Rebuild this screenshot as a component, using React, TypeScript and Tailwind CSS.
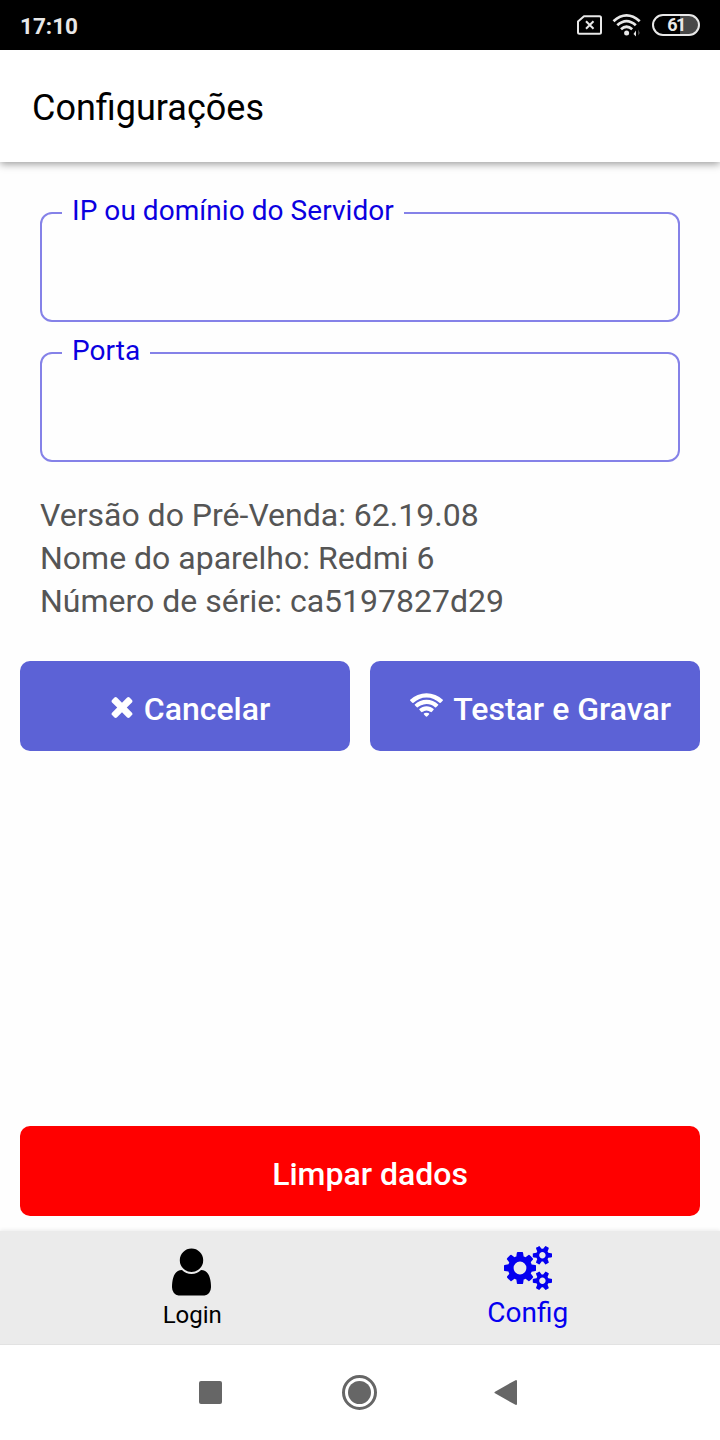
import React from 'react';

interface IconProps {
    path: string;
    viewBox: string;
    className?: string;
}

const TIMES = 'M1490 1322q0 40-28 68l-136 136q-28 28-68 28t-68-28l-294-294-294 294q-28 28-68 28t-68-28l-136-136q-28-28-28-68t28-68l294-294-294-294q-28-28-28-68t28-68l136-136q28-28 68-28t68 28l294 294 294-294q28-28 68-28t68 28l136 136q28 28 28 68t-28 68l-294 294 294 294q28 28 28 68z';
const WIFI = 'M1024 1523q-20 0-93-73.5t-73-93.5q0-32 62.5-54t103.5-22 103.5 22 62.5 54q0 20-73 93.5t-93 73.5zm270-271q-2 0-40-25t-101.5-50-128.5-25-128.5 25-101 50-40.5 25q-18 0-93.5-75t-75.5-93q0-13 10-23 78-77 196-121t233-44 233 44 196 121q10 10 10 23 0 18-75.5 93t-93.5 75zm273-272q-11 0-23-8-136-105-252-154.5t-268-49.5q-85 0-170.5 22t-149 53-113.5 62-79 53-31 22q-17 0-92-75t-75-93q0-12 10-22 132-132 320-205t380-73 380 73 320 205q10 10 10 22 0 18-75 93t-92 75zm271-271q-11 0-22-9-179-157-371.5-236.5t-420.5-79.5-420.5 79.5-371.5 236.5q-11 9-22 9-17 0-92.5-75t-75.5-93q0-13 10-23 187-186 445-288t527-102 527 102 445 288q10 10 10 23 0 18-75.5 93t-92.5 75z';
const USER = 'M1536 1399q0 109-62.5 187t-150.5 78h-854q-88 0-150.5-78t-62.5-187q0-85 8.5-160.5t31.5-152 58.5-131 94-89 134.5-34.5q131 128 313 128t313-128q76 0 134.5 34.5t94 89 58.5 131 31.5 152 8.5 160.5zm-256-887q0 159-112.5 271.5t-271.5 112.5-271.5-112.5-112.5-271.5 112.5-271.5 271.5-112.5 271.5 112.5 112.5 271.5z';
const COGS = 'M896 896q0-106-75-181t-181-75-181 75-75 181 75 181 181 75 181-75 75-181zm768 512q0-52-38-90t-90-38-90 38-38 90q0 53 37.5 90.5t90.5 37.5 90.5-37.5 37.5-90.5zm0-1024q0-52-38-90t-90-38-90 38-38 90q0 53 37.5 90.5t90.5 37.5 90.5-37.5 37.5-90.5zm-384 421v185q0 10-7 19.5t-16 10.5l-155 24q-11 35-32 76 34 48 90 115 7 11 7 20 0 12-7 19-23 30-82.5 89.5t-78.5 59.5q-11 0-21-7l-115-90q-37 19-77 31-11 108-23 155-7 24-30 24h-186q-11 0-20-7.5t-10-17.5l-23-153q-34-10-75-31l-118 89q-7 7-20 7-11 0-21-8-144-133-144-160 0-9 7-19 10-14 41-53t47-61q-23-44-35-82l-152-24q-10-1-17-9.5t-7-19.5v-185q0-10 7-19.5t16-10.5l155-24q11-35 32-76-34-48-90-115-7-11-7-20 0-12 7-20 22-30 82-89t79-59q11 0 21 7l115 90q34-18 77-32 11-108 23-154 7-24 30-24h186q11 0 20 7.5t10 17.5l23 153q34 10 75 31l118-89q8-7 20-7 11 0 21 8 144 133 144 160 0 9-7 19-12 16-42 54t-45 60q23 48 34 82l152 23q10 2 17 10.5t7 19.5zm640 533v140q0 16-149 31-12 27-30 52 51 113 51 138 0 4-4 7-122 71-124 71-8 0-46-47t-52-68q-20 2-30 2t-30-2q-14 21-52 68t-46 47q-2 0-124-71-4-3-4-7 0-25 51-138-18-25-30-52-149-15-149-31v-140q0-16 149-31 13-29 30-52-51-113-51-138 0-4 4-7 4-2 35-20t59-34 30-16q8 0 46 46.5t52 67.5q20-2 30-2t30 2q51-71 92-112l6-2q4 0 124 70 4 3 4 7 0 25-51 138 17 23 30 52 149 15 149 31zm0-1024v140q0 16-149 31-12 27-30 52 51 113 51 138 0 4-4 7-122 71-124 71-8 0-46-47t-52-68q-20 2-30 2t-30-2q-14 21-52 68t-46 47q-2 0-124-71-4-3-4-7 0-25 51-138-18-25-30-52-149-15-149-31v-140q0-16 149-31 13-29 30-52-51-113-51-138 0-4 4-7 4-2 35-20t59-34 30-16q8 0 46 46.5t52 67.5q20-2 30-2t30 2q51-71 92-112l6-2q4 0 124 70 4 3 4 7 0 25-51 138 17 23 30 52 149 15 149 31z';

const Icon: React.FC<IconProps> = ({ path, viewBox, className }) => (
    <svg viewBox={viewBox} className={className} fill="currentColor">
        <path d={path} />
    </svg>
);

const StatusBar: React.FC = () => (
    <div className="flex h-[50px] items-center justify-between bg-black px-5 text-[#e8e8e8]">
        <span className="pt-0.5 text-[22.5px] font-bold leading-none">17:10</span>
        <div className="flex items-center">
            <svg width="26" height="20" viewBox="0 0 26 20" fill="none" stroke="currentColor" strokeWidth="2" className="mr-[9px]">
                <path d="M7 1.2h15.5q1.5 0 1.5 1.5v14.6q0 1.5-1.5 1.5h-20q-1.500 0-1.500-1.500V6.500z" strokeLinejoin="round" />
                <path d="M9 6.200l7.500 7.600M16.500 6.200L9 13.800" />
            </svg>
            <svg width="30" height="24" viewBox="0 0 30 24" fill="none" stroke="currentColor" strokeWidth="2.800" className="mr-2.5">
                <path d="M1.500 8.300Q14.500-3.500 27.700 8.300" />
                <path d="M5.300 12.300Q14.500 4 23.800 12.300" />
                <path d="M9 16.200Q14.500 11.300 20.200 16.200" />
                <circle cx="14.600" cy="20" r="2.500" fill="currentColor" stroke="none" />
                <path d="M24 17.500v6l-2.500-2.500z" fill="currentColor" stroke="none" />
                <path d="M26 16.500v6l2-2.500z" fill="#444" stroke="none" />
            </svg>
            <div className="flex h-[22px] w-12 items-center justify-center rounded-full border-2 border-[#e8e8e8] bg-linear-to-r from-black from-60% to-[#484848] to-60% text-[18px] font-bold leading-none tracking-[-1.5px]">
                61
            </div>
        </div>
    </div>
);

const Field: React.FC<{ label: string }> = ({ label }) => (
    <fieldset className="h-[126px] rounded-xl border-2 border-[#8582e8] pl-5">
        <legend className="px-2.5 pb-1 text-[28px] leading-[30px] tracking-[0.05px] text-[#0b00e0]">{label}</legend>
    </fieldset>
);

const BottomTabs: React.FC = () => (
    <div className="flex h-[113px] bg-[#ebebeb] shadow-[0_-1px_4px_rgba(0,0,0,0.08)]">
        <div className="flex flex-1 flex-col items-center pl-[23px] pt-[17px] text-black">
            <Icon path={USER} viewBox="256 128 1280 1536" className="h-12 w-[39px]" />
            <span className="mt-1 pl-0.5 text-2xl leading-[30px]">Login</span>
        </div>
        <div className="flex flex-1 flex-col items-center pr-6 pt-[15px] text-[#0500f0]">
            <Icon path={COGS} viewBox="0 16 1920 1760" className="h-11 w-12" />
            <span className="mt-[7px] text-[28px] leading-8">Config</span>
        </div>
    </div>
);

const NavigationBar: React.FC = () => (
    <div className="flex h-24 items-center border-t border-[#e2e2e2] bg-white pl-[199px] text-[#666]">
        <div className="size-[23px] rounded-[2px] bg-current" />
        <div className="ml-[120px] flex size-[35px] items-center justify-center rounded-full border-[3px] border-current">
            <div className="size-[23px] rounded-full bg-current" />
        </div>
        <svg width="24" height="27" viewBox="0 0 24 27" fill="currentColor" stroke="currentColor" strokeWidth="2" strokeLinejoin="round" className="ml-[117px]">
            <path d="M1.500 13.500L22 2v23z" />
        </svg>
    </div>
);

const App: React.FC = () => {
    const info = [
        'Versão do Pré-Venda: 62.19.08',
        'Nome do aparelho: Redmi 6',
        'Número de série: ca5197827d29'
    ];

    return (
        <div className="flex h-[1440px] w-[720px] flex-col overflow-hidden bg-[#fefefe] font-['Roboto',sans-serif]">
            <StatusBar />
            <header className="flex h-28 items-center bg-white pl-8 pt-1 text-4xl text-black shadow-[0_2px_8px_rgba(0,0,0,0.4)]">
                Configurações
            </header>

            <main className="flex flex-1 flex-col px-5 pb-[15px] pt-[34px]">
                <div className="flex flex-col gap-3.5 px-5">
                    <Field label="IP ou domínio do Servidor" />
                    <Field label="Porta" />
                </div>

                <div className="mt-8 px-5 text-[32px] leading-[43px] text-[#555]">
                    {info.map(line => (
                        <p key={line}>{line}</p>
                    ))}
                </div>

                <div className="mt-[38px] grid grid-cols-2 gap-5 text-[32px] font-medium text-white">
                    <button className="flex h-[90px] items-center justify-center rounded-[10px] bg-[#5c62d6] pl-[11px] pt-1.5">
                        <Icon path={TIMES} viewBox="302 302 1188 1252" className="mb-1 mr-[11px] size-[22px]" />
                        Cancelar
                    </button>
                    <button className="flex h-[90px] items-center justify-end rounded-[10px] bg-[#5c62d6] pr-[29px] pt-1.5">
                        <Icon path={WIFI} viewBox="42 128 1964 1395" className="mb-2 mr-2.5 h-[24px] w-[33px]" />
                        Testar e Gravar
                    </button>
                </div>

                <button className="mt-auto h-[90px] rounded-[10px] bg-[#ff0000] pl-5 pt-1.5 text-[32px] font-medium text-white">
                    Limpar dados
                </button>
            </main>

            <BottomTabs />
            <NavigationBar />
        </div>
    );
};

export default App;
